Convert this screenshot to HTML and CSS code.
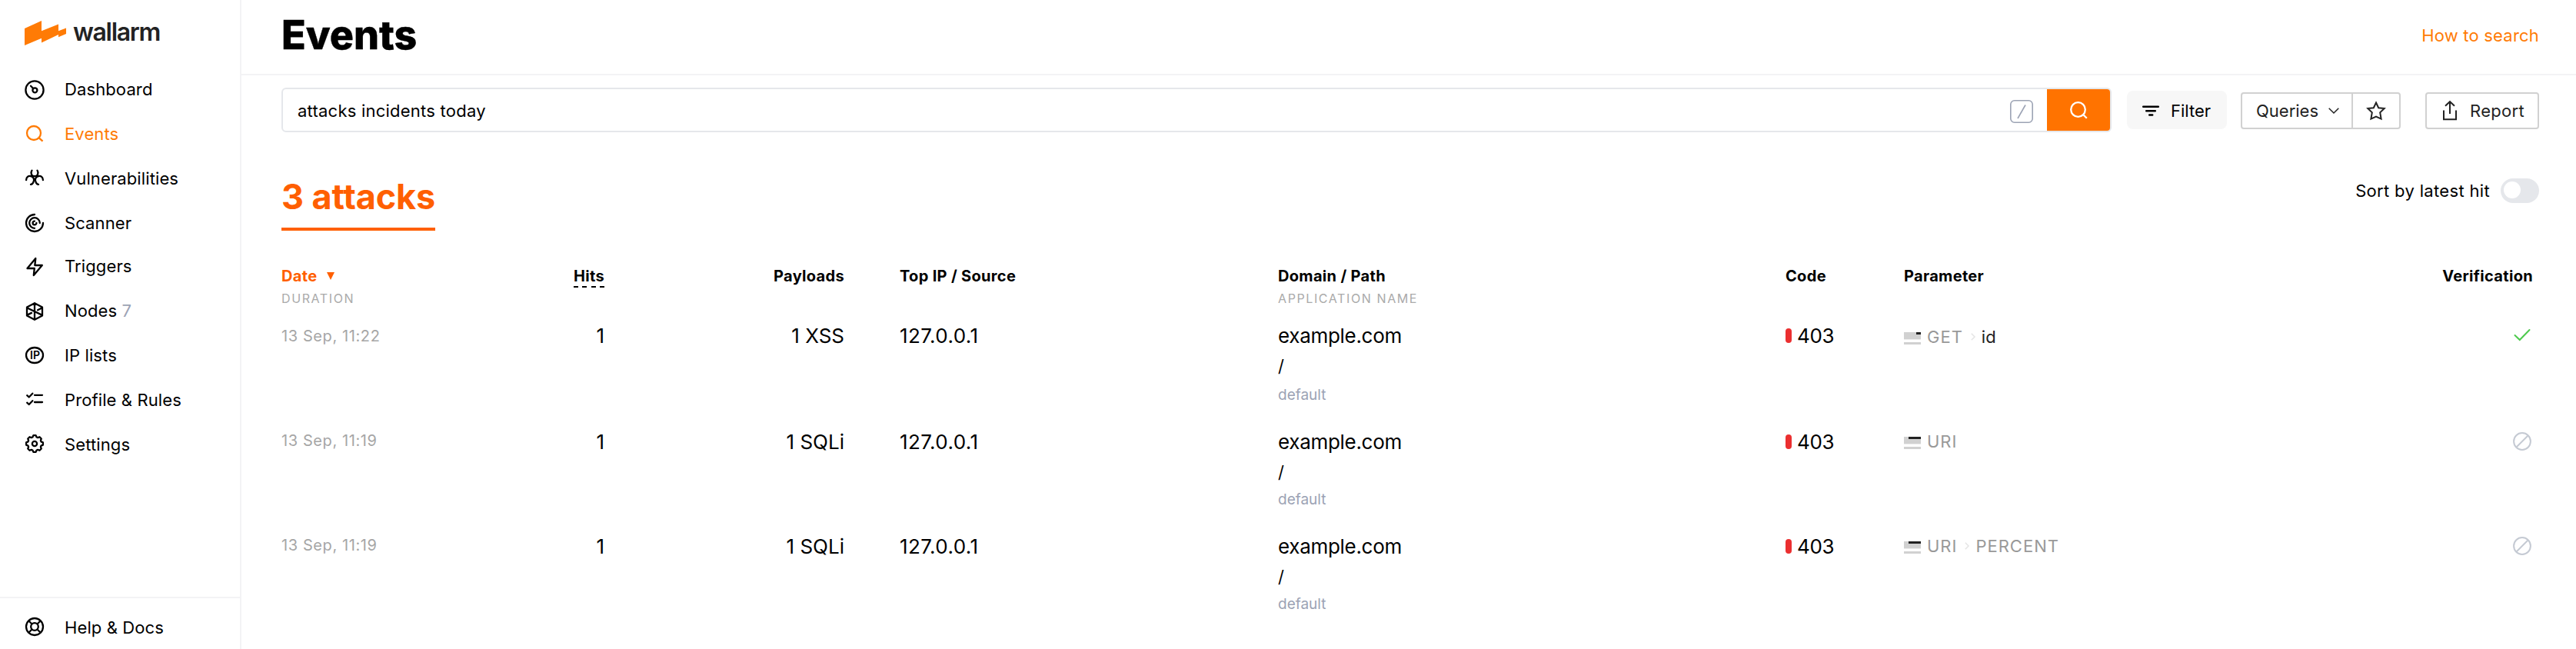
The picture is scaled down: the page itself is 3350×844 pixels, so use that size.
FILE: index.html
```html
<!DOCTYPE html>
<html lang="en">
<head>
<meta charset="utf-8">
<title>Events</title>
<link rel="stylesheet" href="styles.css">
</head>
<body>
<aside class="sidebar">
  <div class="logo">
    <svg class="logo-mark" viewBox="0 0 54 32"><path fill="#ff7b05" d="M0 10 22 0v13.300L44 4.500v8.700l10-3.700v7.500l-10 4.300v-3.300L22 28.500v-5.700L0 32z"/></svg>
    <span class="logo-text">wallarm</span>
  </div>
  <nav class="nav">
    <a class="nav-item"><svg class="icon" viewBox="0 0 24 24"><circle cx="12" cy="13" r="11.600"/><circle cx="12.400" cy="13.300" r="3"/><path d="M7 7.800l3.200 3.200"/></svg><span>Dashboard</span></a>
    <a class="nav-item active"><svg class="icon thin" viewBox="0 0 24 24"><circle cx="11" cy="11" r="9"/><path d="M17.500 17.200l5 4.500"/></svg><span>Events</span></a>
    <a class="nav-item"><svg class="icon" viewBox="0 0 24 24"><path d="M8.500 1.600C6.200 5 8 9.200 12 9.200S17.800 5 15.500 1.600M1.100 14.200C1 10.400 4 8.300 7 9.100 10.800 10.100 12 13.500 10.500 16.600 9.800 18.500 8.500 19.800 7 19.900M22.900 14.200C23 10.400 20 8.300 17 9.100 13.200 10.100 12 13.500 13.500 16.600 14.200 18.500 15.500 19.800 17 19.900"/></svg><span>Vulnerabilities</span></a>
    <a class="nav-item"><svg class="icon" viewBox="0 0 24 24"><path d="M12 1A11 11 0 1 0 23 12M12 18.800A6.800 6.800 0 1 1 18.800 12M12 9.600A2.400 2.400 0 1 0 14.400 12"/></svg><span>Scanner</span></a>
    <a class="nav-item pulled"><svg class="icon" viewBox="0 0 24 24"><path d="M13.300 2 2.500 15h9.300l-1 9L21.800 11h-9.500z"/></svg><span>Triggers</span></a>
    <a class="nav-item"><svg class="icon" viewBox="0 0 24 24"><path d="M12 2.200 22 7.600v10.800l-10 5.400-10-5.400V7.600zM12 2.200v21.600M2 8.300l20 9.600M22 8.300l-6 3M2 17.900l6-3"/></svg><span>Nodes <span class="count">7</span></span></a>
    <a class="nav-item"><svg class="icon" viewBox="0 0 24 24"><ellipse cx="12" cy="12" rx="11" ry="10"/><text class="ip" x="12.500" y="17">IP</text></svg><span>IP lists</span></a>
    <a class="nav-item"><svg class="icon" viewBox="0 0 24 24"><path d="M2.200 6.200l2.500 2.300 4.600-4.800M2.200 15.700l2.500 2.300 4.600-4.800M12 5.800h10M12 15h10"/></svg><span>Profile &amp; Rules</span></a>
    <a class="nav-item"><svg class="icon" viewBox="-12 -11 24 24"><path d="M10.900-1.600V1.600L8.500 2.600 7.900 4.200 8.740 6.510 6.510 8.740 4.200 7.900 2.600 8.500 1.600 10.900H-1.600L-2.600 8.500-4.200 7.900-6.510 8.740-8.740 6.510-7.900 4.200-8.500 2.600-10.900 1.600V-1.600L-8.500-2.600-7.900-4.200-8.740-6.510-6.510-8.740-4.200-7.900-2.600-8.500-1.600-10.900H1.600L2.600-8.500 4.200-7.900 6.510-8.740 8.740-6.510 7.900-4.200 8.500-2.600z"/><circle r="3.100"/></svg><span>Settings</span></a>
  </nav>
  <div class="sidebar-foot">
    <a class="nav-item"><svg class="icon" viewBox="0 0 24 24"><circle cx="12" cy="11" r="11"/><circle cx="12" cy="11" r="4.800"/><path d="M4.500 3.500l4 4M19.500 3.500l-4 4M4.500 18.500l4-4M19.500 18.500l-4-4"/></svg><span>Help &amp; Docs</span></a>
  </div>
</aside>
<main class="main">
  <header class="topbar"><h1 class="title">Events</h1><a class="howto">How to search</a></header>
  <div class="toolbar">
    <div class="search">
      <span class="query">attacks incidents today</span>
      <svg class="key" viewBox="0 0 30 30"><rect x=".800" y=".800" width="28.400" height="28.400" rx="5"/><path d="M10 24 20 6.500"/></svg>
      <button class="search-btn"><svg viewBox="0 0 24 24"><circle cx="11.500" cy="11.500" r="9.300"/><path d="M18.300 18.300l4.500 4.500"/></svg></button>
    </div>
    <button class="filter"><svg viewBox="0 0 22 14"><path d="M1.200 1.700h19.600M5.200 7.200h11.600M9.200 12.500h4"/></svg><span>Filter</span></button>
    <div class="queries">
      <button class="queries-btn"><span>Queries</span><svg viewBox="0 0 14 8"><path d="M.7.700 7 7 13.300.700"/></svg></button>
      <button class="star"><svg viewBox="0 0 26 26"><path d="M13 2.500l3.200 6.700 7.500.900-5.500 5.200 1.400 8.300L13 20.700l-6.600 2.900 1.400-8.300-5.500-5.200 7.500-.900z"/></svg></button>
    </div>
    <button class="report"><svg viewBox="0 0 18 26"><path d="M1 12.500v11.800h16V12.500M9 17V1.500M3 6.700l6-5.500 6 5.500"/></svg><span>Report</span></button>
  </div>
  <div class="summary">
    <h2 class="tab">3 attacks</h2>
    <label class="sort"><span>Sort by latest hit</span><span class="toggle"><span class="knob"></span></span></label>
  </div>
  <section class="table">
    <div class="row head">
      <div><div class="th sorted"><span>Date</span><svg viewBox="0 0 10 10"><path d="M0 0h10L5 10z"/></svg></div><div class="sub">DURATION</div></div>
      <div class="h-cell"><span class="th hits">Hits</span></div>
      <div class="right"><div class="th">Payloads</div></div>
      <div class="c-ip"><div class="th">Top IP / Source</div></div>
      <div><div class="th">Domain / Path</div><div class="sub">APPLICATION NAME</div></div>
      <div><div class="th">Code</div></div>
      <div><div class="th">Parameter</div></div>
      <div class="right c-ver"><div class="th">Verification</div></div>
    </div>
    <div class="row first">
      <div class="date">13 Sep, 11:22</div>
      <div class="val right">1</div>
      <div class="val right">1 XSS</div>
      <div class="val c-ip">127.0.0.1</div>
      <div><div class="val domain">example.com</div><div class="path">/</div><div class="app">default</div></div>
      <div class="val code"><i class="pill"></i><span>403</span></div>
      <div class="param"><svg class="pt" viewBox="0 0 22 16"><path fill="#d1d1d1" d="M0 0h22v9H0zM0 13h22v3H0z"/><path fill="#ededed" d="M0 9h22v1H0z"/><path fill="#222" d="M16 0h6v3h-6z"/></svg><span>GET</span><svg class="sep" viewBox="0 0 6 10"><path d="M.8.800 5 5 .8 9.200"/></svg><span class="pname">id</span></div>
      <div class="verif"><svg class="ok" viewBox="0 0 24 24"><path d="M2.500 12l6.300 6L21.500 5"/></svg></div>
    </div>
    <div class="row">
      <div class="date">13 Sep, 11:19</div>
      <div class="val right">1</div>
      <div class="val right">1 SQLi</div>
      <div class="val c-ip">127.0.0.1</div>
      <div><div class="val domain">example.com</div><div class="path">/</div><div class="app">default</div></div>
      <div class="val code"><i class="pill"></i><span>403</span></div>
      <div class="param"><svg class="pt" viewBox="0 0 22 16"><path fill="#d1d1d1" d="M0 0h22v9H0zM0 13h22v3H0z"/><path fill="#ededed" d="M0 9h22v1H0z"/><path fill="#222" d="M6 0h16v3H6z"/></svg><span>URI</span></div>
      <div class="verif"><svg class="ban" viewBox="0 0 24 24"><circle cx="12" cy="12" r="10.900"/><path d="M19.500 4.500l-15 15"/></svg></div>
    </div>
    <div class="row">
      <div class="date">13 Sep, 11:19</div>
      <div class="val right">1</div>
      <div class="val right">1 SQLi</div>
      <div class="val c-ip">127.0.0.1</div>
      <div><div class="val domain">example.com</div><div class="path">/</div><div class="app">default</div></div>
      <div class="val code"><i class="pill"></i><span>403</span></div>
      <div class="param"><svg class="pt" viewBox="0 0 22 16"><path fill="#d1d1d1" d="M0 0h22v9H0zM0 13h22v3H0z"/><path fill="#ededed" d="M0 9h22v1H0z"/><path fill="#222" d="M6 0h16v3H6z"/></svg><span>URI</span><svg class="sep" viewBox="0 0 6 10"><path d="M.8.800 5 5 .8 9.200"/></svg><span>PERCENT</span></div>
      <div class="verif"><svg class="ban" viewBox="0 0 24 24"><circle cx="12" cy="12" r="10.900"/><path d="M19.500 4.500l-15 15"/></svg></div>
    </div>
  </section>
</main>
</body>
</html>
```
FILE: styles.css
```css
* { box-sizing: border-box; }
body { margin: 0; width: 3350px; height: 844px; display: flex; background: #fff; color: #000; font: 400 22px/28px Inter, sans-serif; overflow: hidden; }
button { border: 0; background: none; padding: 0; margin: 0; font: inherit; color: inherit; letter-spacing: inherit; display: flex; align-items: center; }
svg { display: block; flex: none; fill: none; stroke: currentColor; overflow: visible; }
h1, h2 { margin: 0; }

.sidebar { width: 314px; height: 844px; border-right: 2px solid #f3f3f5; display: flex; flex-direction: column; }
.logo { height: 87px; padding: 27px 0 0 32px; display: flex; gap: 9px; }
.logo-mark { width: 54px; height: 32px; stroke: none; }
.logo-text { font-size: 32px; font-weight: 600; line-height: 30px; color: #222; letter-spacing: -1.300px; }
.nav { flex: 1; }
.nav-item { height: 58px; padding-left: 33px; display: flex; align-items: center; gap: 27px; letter-spacing: .110px; }
.nav-item.active { color: #ff7b05; }
.nav-item.pulled { margin-top: -2px; }
.icon { width: 24px; height: 24px; stroke-width: 2.3; stroke-linecap: round; stroke-linejoin: round; }
.icon.thin { stroke-linecap: butt; }
.ip { font: 600 14px Inter, sans-serif; letter-spacing: 0; fill: currentColor; stroke: none; text-anchor: middle; }
.count { color: #9ca3b4; }
.sidebar-foot { height: 68px; border-top: 2px solid #f3f3f5; padding-top: 9px; }

.main { flex: 1; }
.topbar { height: 98px; border-bottom: 2px solid #f3f3f5; padding: 0 48px 0 52px; display: flex; justify-content: space-between; }
.title { font-size: 52px; font-weight: 800; line-height: 92px; -webkit-text-stroke: .4px #000; }
.howto { line-height: 92px; color: #ff7b05; letter-spacing: .200px; }

.toolbar { padding: 16px 48px 0 52px; height: 74px; display: flex; align-items: flex-start; }
.search { width: 2380px; height: 58px; border: 2px solid #e5e7eb; border-radius: 6px; display: flex; align-items: center; overflow: hidden; }
.query { flex: 1; padding: 2px 0 0 19px; letter-spacing: .230px; }
.key { width: 30px; height: 30px; margin: 4px 18px 0 0; color: #9ca3b4; stroke-width: 1.600; }
.search-btn { width: 82px; height: 54px; justify-content: center; background: #ff7300; color: #fff; }
.search-btn svg { width: 24px; height: 24px; stroke-width: 2.300; }
.filter { width: 130px; height: 50px; margin: 4px 0 0 20px; padding: 2px 0 0 20px; gap: 15px; background: #f7f7f7; border-radius: 8px; }
.filter svg { width: 22px; height: 14px; stroke-width: 2.500; stroke-linecap: round; }
.queries { width: 208px; height: 48px; margin: 6px 0 0 18px; border: 2px solid #d1d1d1; border-radius: 4px; display: flex; color: #222; }
.queries-btn { width: 144px; padding-left: 18px; gap: 13px; border-right: 2px solid #d1d1d1; }
.queries-btn svg { width: 14px; height: 8px; stroke-width: 1.500; }
.star { flex: 1; justify-content: center; }
.star svg { width: 26px; height: 26px; stroke-width: 2; }
.report { width: 148px; height: 48px; margin: 6px 0 0 32px; padding-left: 21px; gap: 17px; border: 2px solid #d1d1d1; border-radius: 4px; color: #222; letter-spacing: .300px; }
.report svg { width: 18px; height: 26px; stroke-width: 2; }

.summary { height: 173px; padding: 60px 48px 0 52px; display: flex; justify-content: space-between; align-items: flex-start; }
.tab { font-size: 45px; font-weight: 700; line-height: 48px; height: 68px; letter-spacing: -.150px; color: #ff5f00; border-bottom: 4px solid #ff5f00; }
.sort { display: flex; align-items: center; gap: 14px; height: 32px; letter-spacing: .330px; }
.toggle { width: 50px; height: 32px; border-radius: 16px; background: #e5e7eb; padding: 4px; }
.knob { display: block; width: 22px; height: 22px; border-radius: 50%; background: #fff; }

.table { padding: 0 48px 0 52px; }
.row { display: grid; grid-template-columns: 210px 210px 312px 564px 660px 154px 1fr 200px; height: 136px; }
.row.head { height: 71px; }
.row.first { height: 138px; }
.right { text-align: right; }
.c-ip { padding-left: 72px; }
.val.c-ip { letter-spacing: .400px; }
.c-ver { padding-right: 8px; }
.th { font-size: 20px; font-weight: 700; line-height: 28px; letter-spacing: .320px; }
.sorted { color: #ff5f00; display: flex; align-items: center; gap: 13px; }
.sorted svg { width: 10px; height: 10px; fill: currentColor; stroke: none; }
.h-cell { display: flex; justify-content: flex-end; align-items: flex-start; }
.hits { height: 29px; background: repeating-linear-gradient(90deg, #000 0 6px, transparent 6px 11.300px) left bottom / 100% 2px no-repeat; }
.sub { font-size: 16px; line-height: 30px; letter-spacing: 1.600px; color: #aaa; }
.date { font-size: 20px; line-height: 42px; letter-spacing: .600px; color: #a6a6a6; margin-top: -2px; }
.val { font-size: 26px; line-height: 42px; }
.domain { letter-spacing: -.300px; }
.path { line-height: 40px; margin-top: -2px; }
.app { font-size: 19px; line-height: 32px; color: #9ca3b4; }
.first .date { margin-top: 0; }
.first .app { line-height: 36px; }
.code { display: flex; gap: 7px; letter-spacing: -.300px; }
.pill { width: 8px; height: 19px; border-radius: 4px; background: #eb2f30; margin-top: 11px; }
.param { height: 40px; display: flex; align-items: center; letter-spacing: 1px; color: #999; }
.first .param { padding-top: 2px; height: 42px; }
.pt { width: 22px; height: 16px; stroke: none; margin: 3px 8px 0 0; }
.sep { width: 6px; height: 10px; color: #e5e5e5; stroke-width: 1.500; margin: 0 8px 0 10px; }
.pname { color: #222; letter-spacing: 0; }
.verif { height: 40px; padding-right: 10px; display: flex; justify-content: flex-end; align-items: center; }
.ok, .ban { width: 24px; height: 24px; stroke-width: 2; color: #c5cad3; }
.ok { color: #4cc94c; stroke-linecap: round; }
```
